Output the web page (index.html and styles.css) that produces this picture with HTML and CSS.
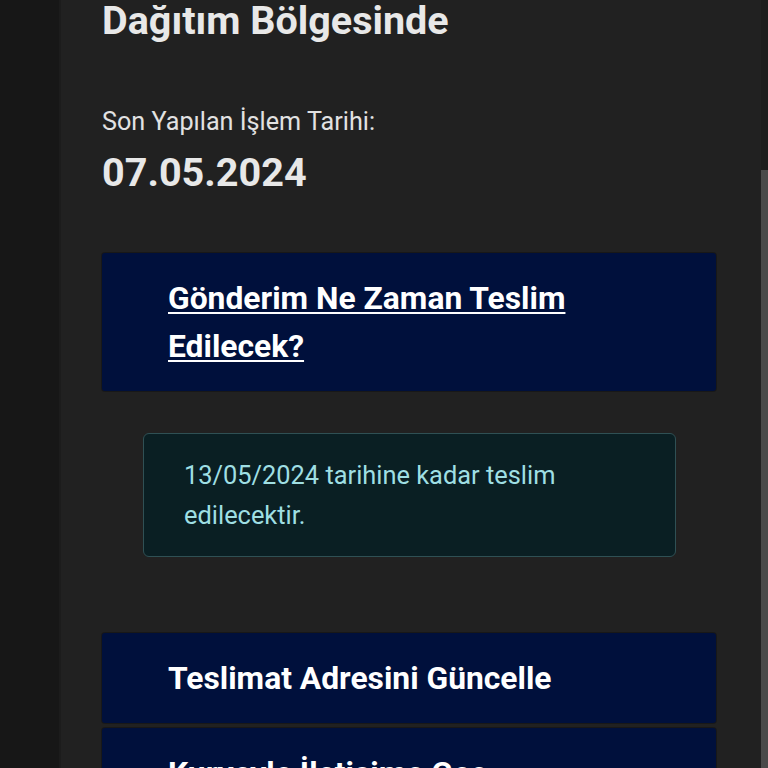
FILE: index.html
```html
<!DOCTYPE html>
<html lang="tr">
<head>
<meta charset="utf-8">
<title>Gönderi Takibi</title>
<link rel="stylesheet" href="styles.css">
</head>
<body>
<div class="shell">
  <div class="side"></div>
  <main class="panel">
    <h1 class="status">Dağıtım Bölgesinde</h1>
    <p class="label">Son Yapılan İşlem Tarihi:</p>
    <p class="date">07.05.2024</p>

    <div class="card card-faq">
      <a class="card-link" href="#">Gönderim Ne Zaman Teslim Edilecek?</a>
    </div>

    <div class="alert">13/05/2024 tarihine kadar teslim edilecektir.</div>

    <div class="actions">
      <div class="card"><span class="card-title">Teslimat Adresini Güncelle</span></div>
      <div class="card"><span class="card-title">Kuryeyle İletişime Geç</span></div>
    </div>
  </main>
  <div class="scrollbar"><div class="thumb"></div></div>
</div>
</body>
</html>
```

FILE: styles.css
```css
html, body {
  margin: 0;
  padding: 0;
  height: 100%;
  background: #171717;
  overflow: hidden;
}

body {
  font-family: Roboto, "Liberation Sans", sans-serif;
  color: #e6e6e6;
}

.shell {
  display: flex;
  height: 768px;
}

.side {
  width: 59px;
  flex: none;
  background: #171717;
  border-right: 2px solid #1c1c1c;
}

.panel {
  flex: 1;
  background: #212121;
  padding: 0 45px 0 41px;
  overflow: hidden;
}

.scrollbar {
  width: 7px;
  flex: none;
  background: #1d1d1d;
  display: flex;
  flex-direction: column;
}

.thumb {
  margin-top: 170px;
  flex: 1;
  background: #4a4a4a;
}

.status {
  margin: 0;
  font-size: 39.5px;
  line-height: 42px;
  font-weight: 700;
  color: #e8e8e8;
}

.label {
  margin: 65px 0 0;
  font-size: 25.2px;
  line-height: 30px;
  font-weight: 400;
  color: #e2e2e2;
}

.date {
  margin: 12px 0 0;
  font-size: 39.6px;
  line-height: 48px;
  font-weight: 700;
  color: #e8e8e8;
}

.card {
  background: #00103c;
  border-radius: 3px;
  padding: 21px 40px 21px 66px;
  box-shadow: 0 0 0 1px rgba(0, 0, 0, 0.25);
}

.card-faq {
  margin-top: 56px;
}

.card-link,
.card-title {
  font-size: 31.8px;
  line-height: 48px;
  font-weight: 700;
  color: #ffffff;
}

.card-link {
  display: block;
  text-decoration: underline;
  text-decoration-thickness: 2px;
  text-underline-offset: 3px;
  padding-right: 90px;
}

.card-title {
  display: block;
}

.alert {
  margin: 42px 40px 0 41px;
  background: #0a1f23;
  border: 1px solid #2f5054;
  border-radius: 6px;
  padding: 21px 60px 21px 40px;
  font-size: 25.4px;
  line-height: 40px;
  color: #9fdfe3;
}

.actions {
  margin-top: 76px;
  display: flex;
  flex-direction: column;
  gap: 5px;
}
```
